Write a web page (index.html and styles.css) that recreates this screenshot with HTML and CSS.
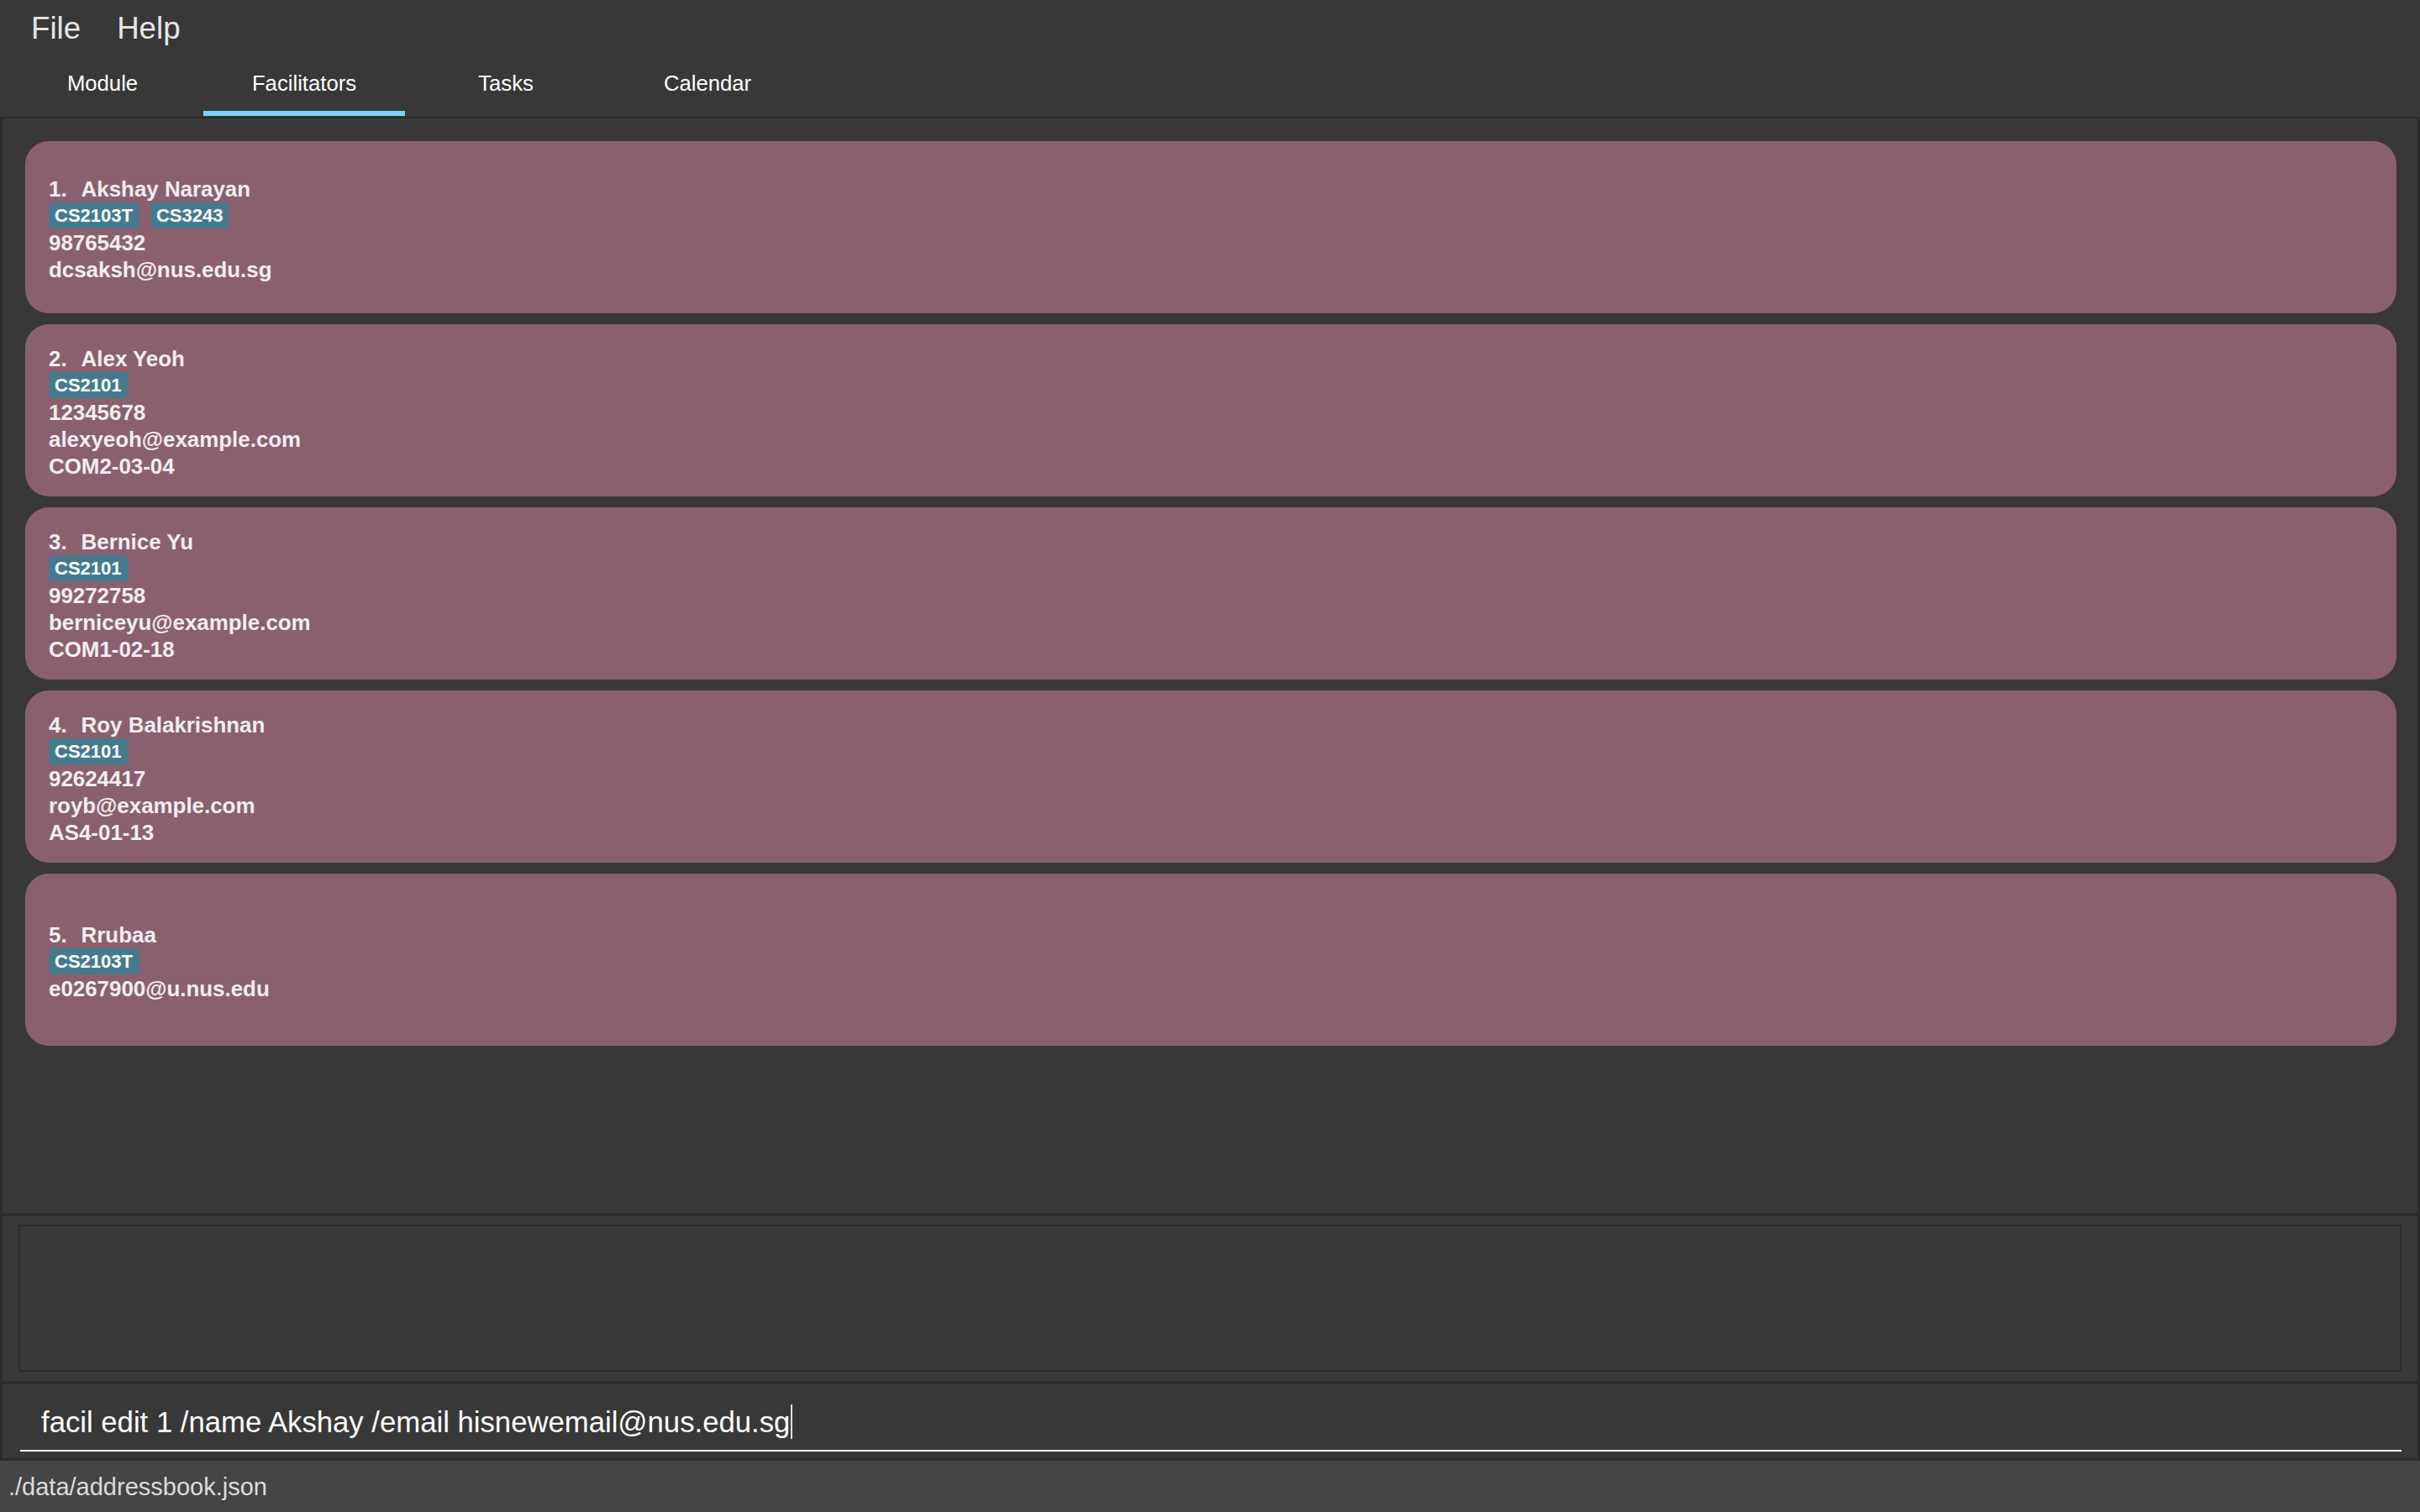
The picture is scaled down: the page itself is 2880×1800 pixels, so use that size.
FILE: index.html
```html
<!DOCTYPE html>
<html lang="en">
<head>
<meta charset="utf-8">
<title>Facilitators</title>
<link rel="stylesheet" href="styles.css">
</head>
<body>
<div class="app">
  <div class="menubar">
    <span class="menu-item">File</span>
    <span class="menu-item">Help</span>
  </div>
  <div class="tabbar">
    <div class="tab">Module</div>
    <div class="tab active">Facilitators</div>
    <div class="tab">Tasks</div>
    <div class="tab">Calendar</div>
  </div>
  <div class="list-panel">
    <div class="card">
      <div class="line name"><span class="idx">1.</span><span>Akshay Narayan</span></div>
      <div class="tags"><span class="tag">CS2103T</span><span class="tag">CS3243</span></div>
      <div class="line">98765432</div>
      <div class="line">dcsaksh@nus.edu.sg</div>
    </div>
    <div class="card">
      <div class="line name"><span class="idx">2.</span><span>Alex Yeoh</span></div>
      <div class="tags"><span class="tag">CS2101</span></div>
      <div class="line">12345678</div>
      <div class="line">alexyeoh@example.com</div>
      <div class="line">COM2-03-04</div>
    </div>
    <div class="card">
      <div class="line name"><span class="idx">3.</span><span>Bernice Yu</span></div>
      <div class="tags"><span class="tag">CS2101</span></div>
      <div class="line">99272758</div>
      <div class="line">berniceyu@example.com</div>
      <div class="line">COM1-02-18</div>
    </div>
    <div class="card">
      <div class="line name"><span class="idx">4.</span><span>Roy Balakrishnan</span></div>
      <div class="tags"><span class="tag">CS2101</span></div>
      <div class="line">92624417</div>
      <div class="line">royb@example.com</div>
      <div class="line">AS4-01-13</div>
    </div>
    <div class="card">
      <div class="line name"><span class="idx">5.</span><span>Rrubaa</span></div>
      <div class="tags"><span class="tag">CS2103T</span></div>
      <div class="line">e0267900@u.nus.edu</div>
    </div>
  </div>
  <div class="result-wrap">
    <div class="result-box"></div>
  </div>
  <div class="command-wrap">
    <div class="command-input">facil edit 1 /name Akshay /email hisnewemail@nus.edu.sg<span class="caret"></span></div>
  </div>
  <div class="status-bar">./data/addressbook.json</div>
</div>
</body>
</html>
```
FILE: styles.css
```css
html, body {
  margin: 0;
  padding: 0;
}
body {
  background: #383838;
  font-family: "Liberation Sans", Arial, sans-serif;
  width: 2880px;
  height: 1800px;
  overflow: hidden;
}
.app {
  display: flex;
  flex-direction: column;
  height: 1800px;
}
.menubar {
  height: 70px;
  display: flex;
  align-items: flex-start;
  padding-left: 37px;
  gap: 43px;
  font-size: 36.7px;
  line-height: 68px;
  color: #e6e6e6;
}
.tabbar {
  height: 69px;
  display: flex;
  align-items: flex-start;
  padding-left: 2px;
  border-bottom: 2px solid #2a2a2a;
}
.tab {
  width: 240px;
  height: 68px;
  box-sizing: border-box;
  text-align: center;
  font-size: 25.7px;
  line-height: 58px;
  color: #ffffff;
  border-bottom: 6px solid transparent;
}
.tab.active {
  border-bottom-color: #7ad2f6;
}
.list-panel {
  flex: 1;
  min-height: 0;
  border: 3px solid #2b2b2b;
  border-top: none;
  border-bottom-width: 4px;
  padding: 27px 25px 0 27px;
  display: flex;
  flex-direction: column;
  gap: 13px;
}
.card {
  height: 205px;
  box-sizing: border-box;
  flex: none;
  background: #8a606f;
  border-radius: 28px;
  display: flex;
  flex-direction: column;
  justify-content: center;
  padding: 4px 0 0 28px;
  color: #f3eef0;
  font-weight: bold;
  font-size: 25.9px;
}
.line {
  line-height: 32px;
  height: 32px;
  white-space: nowrap;
}
.idx {
  margin-right: 17px;
}
.tags {
  height: 32px;
  display: flex;
  align-items: flex-start;
  gap: 14px;
}
.tag {
  background: #457a8e;
  color: #ffffff;
  font-size: 22px;
  line-height: 31px;
  padding: 0 7px 0 7px;
  border-radius: 4px;
}
.result-wrap {
  flex: none;
  border: 3px solid #2b2b2b;
  border-top: none;
  border-bottom-width: 4px;
  padding: 10px 19px 11px 19px;
}
.result-box {
  height: 175px;
  box-sizing: border-box;
  border: 2px solid #2b2b2b;
  background: #383838;
}
.command-wrap {
  flex: none;
  border: 3px solid #2b2b2b;
  border-top: none;
  padding: 0 19px 8px 21px;
}
.command-input {
  box-sizing: border-box;
  height: 80px;
  padding: 16px 0 4px 25px;
  font-size: 34.7px;
  line-height: 58px;
  color: #ffffff;
  border-bottom: 2px solid #ffffff;
  white-space: nowrap;
}
.caret {
  display: inline-block;
  width: 2px;
  height: 41px;
  margin-left: 1px;
  background: #e0e0e0;
  vertical-align: -8px;
}
.status-bar {
  flex: none;
  height: 61px;
  box-sizing: border-box;
  background: #454545;
  padding: 2px 0 0 10px;
  font-size: 29px;
  line-height: 59px;
  color: #dcdcdc;
}
```
